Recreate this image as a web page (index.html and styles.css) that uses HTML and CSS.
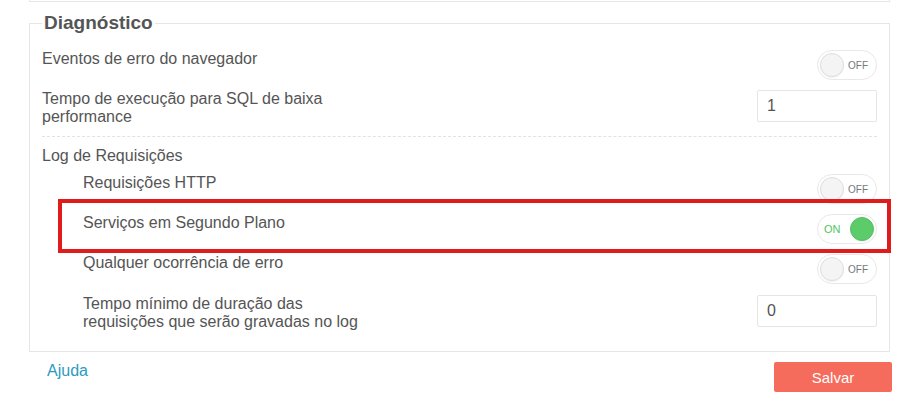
FILE: index.html
```html
<!DOCTYPE html>
<html lang="pt">
<head>
<meta charset="utf-8">
<link rel="stylesheet" href="styles.css">
</head>
<body>
<div class="prev-box"></div>
<fieldset class="panel">
  <legend class="panel-title">Diagnóstico</legend>
  <div class="row">
    <div class="label">Eventos de erro do navegador</div>
    <div class="toggle off"><span class="knob"></span><span class="state">OFF</span></div>
  </div>
  <div class="row gap">
    <div class="label">Tempo de execução para SQL de baixa<br>performance</div>
    <div class="input">1</div>
  </div>
  <div class="sep"></div>
  <div class="group-title">Log de Requisições</div>
  <div class="row sub first">
    <div class="label">Requisições HTTP</div>
    <div class="toggle off"><span class="knob"></span><span class="state">OFF</span></div>
  </div>
  <div class="row sub gap highlight">
    <div class="label">Serviços em Segundo Plano</div>
    <div class="toggle on"><span class="state">ON</span><span class="knob"></span></div>
  </div>
  <div class="row sub gap">
    <div class="label">Qualquer ocorrência de erro</div>
    <div class="toggle off"><span class="knob"></span><span class="state">OFF</span></div>
  </div>
  <div class="row sub gap last">
    <div class="label">Tempo mínimo de duração das<br>requisições que serão gravadas no log</div>
    <div class="input">0</div>
  </div>
</fieldset>
<div class="footer">
  <a class="help" href="#">Ajuda</a>
  <button class="save" type="button">Salvar</button>
</div>
</body>
</html>
```

FILE: styles.css
```css
html, body {
  margin: 0;
  padding: 0;
  background: #fff;
  font-family: "Liberation Sans", Arial, sans-serif;
  color: #555;
}

.prev-box {
  margin-left: 29px;
  width: 861px;
  height: 2px;
  box-sizing: border-box;
  border: 1px solid #e6e6e6;
  border-top: 0;
}

.panel {
  margin: 10px 0 0 29px;
  width: 861px;
  box-sizing: border-box;
  border: 1px solid #e6e6e6;
  padding: 0 12px 20px 12px;
  min-width: 0;
}

.panel-title {
  font-size: 19px;
  font-weight: bold;
  line-height: 22px;
  padding: 0 2px;
  color: #555;
}

.row {
  display: flex;
  justify-content: space-between;
  align-items: flex-start;
  margin-top: 16px;
  position: relative;
}

.row.gap {
  margin-top: 10px;
}

.row.last {
  margin-top: 11px;
}

.row.sub {
  padding-left: 41px;
}

.row.sub.first {
  margin-top: 9px;
}

.label {
  font-size: 16px;
  line-height: 18px;
  color: #555;
}

.toggle {
  width: 60px;
  height: 30px;
  box-sizing: border-box;
  border: 1px solid #e8e8e8;
  border-radius: 15px;
  display: flex;
  align-items: center;
  padding: 0 2px;
  font-size: 10px;
  background: #fff;
}

.toggle.off {
  justify-content: space-between;
  padding-right: 8px;
}

.toggle.off .state {
  color: #777;
}

.toggle.on {
  justify-content: space-between;
  padding-left: 6px;
}

.toggle.on .state {
  color: #4fc65e;
  font-size: 11px;
}

.knob {
  width: 24px;
  height: 24px;
  border-radius: 50%;
  box-sizing: border-box;
  background: #f4f4f4;
  border: 1px solid #dedede;
  box-shadow: 0 1px 1px rgba(0, 0, 0, 0.05);
}

.toggle.on .knob {
  background: #5ccb69;
  border-color: #55bf62;
}

.input {
  width: 120px;
  height: 32px;
  box-sizing: border-box;
  border: 1px solid #e5e5e5;
  border-radius: 2px;
  padding-left: 9px;
  font-size: 16px;
  line-height: 30px;
  color: #555;
}

.sep {
  margin-top: 10px;
  border-top: 1px dashed #e2e2e2;
}

.group-title {
  margin-top: 10px;
  font-size: 16px;
  line-height: 18px;
}

.highlight::after {
  content: "";
  position: absolute;
  left: 16px;
  right: -14px;
  top: -15px;
  bottom: -9px;
  border: 4px solid #e01b1b;
  pointer-events: none;
}

.footer {
  display: flex;
  justify-content: space-between;
  align-items: flex-start;
  margin: 10px 16px 0 47px;
}

.help {
  font-size: 16px;
  line-height: 18px;
  color: #2b9bc0;
  text-decoration: none;
  margin-top: 0;
}

.save {
  width: 118px;
  height: 30px;
  border: 0;
  border-radius: 2px;
  background: #f56c5c;
  color: #fff;
  font-family: "Liberation Sans", Arial, sans-serif;
  font-size: 15px;
  padding: 0;
}
```
